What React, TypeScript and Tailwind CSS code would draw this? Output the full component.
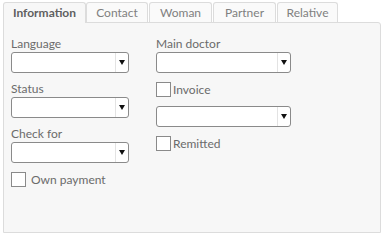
import React from 'react';

const tabs = [
  { name: 'Information', cls: 'w-[83px]' },
  { name: 'Contact', cls: 'w-[62px]' },
  { name: 'Woman', cls: 'ml-px w-[63px]' },
  { name: 'Partner', cls: 'ml-px w-[63px]' },
  { name: 'Relative', cls: 'ml-px w-[61px]' },
];

function Select({ width }: { width: string }) {
  return (
    <div className={`flex h-[21px] ${width} rounded-[3px] border border-[#8a8a8a] bg-white`}>
      <div className="flex-1" />
      <div className="flex w-[13px] items-center justify-center border-l border-[#e3e3e3]">
        <svg width="6" height="5" viewBox="0 0 6 5">
          <path d="M0 0H6L3 5Z" fill="#111" />
        </svg>
      </div>
    </div>
  );
}

function Check({ label, gap }: { label: string; gap: string }) {
  return (
    <div className={`flex items-center ${gap}`}>
      <div className="h-[15px] w-[15px] border border-[#8a8a8a] bg-white" />
      <span className="text-[12px] leading-[15px] text-[#6b6b6b]">{label}</span>
    </div>
  );
}

export default function App() {
  return (
    <div className="h-[240px] w-[383px] bg-white pl-[3px] pr-[2px] pt-[2px] font-['Lato',sans-serif]">
      <div className="flex">
        {tabs.map((t, i) => (
          <div
            key={t.name}
            className={
              i === 0
                ? `relative z-10 -mb-px flex h-[21px] ${t.cls} items-center justify-center rounded-t-[3px] border border-b-0 border-[#dcdcdc] bg-[#f7f7f7] text-[12px] font-bold text-[#5f5f5f]`
                : `flex h-[20px] ${t.cls} items-center justify-center rounded-t-[3px] border border-b-0 border-[#dcdcdc] bg-[#fafafa] text-[12px] text-[#808080]`
            }
          >
            {t.name}
          </div>
        ))}
      </div>
      <div className="flex h-[211px] gap-[27px] rounded-tr-[3px] border border-[#dcdcdc] bg-[#f7f7f7] pl-[7px] pt-[13px]">
        <div className="flex w-[118px] flex-col">
          <span className="text-[12px] leading-[16px] text-[#6b6b6b]">Language</span>
          <Select width="w-[118px]" />
          <span className="mt-[8px] text-[12px] leading-[16px] text-[#6b6b6b]">Status</span>
          <Select width="w-[118px]" />
          <span className="mt-[8px] text-[12px] leading-[16px] text-[#6b6b6b]">Check for</span>
          <Select width="w-[118px]" />
          <div className="mt-[9px]">
            <Check label="Own payment" gap="gap-[5px]" />
          </div>
        </div>
        <div className="flex w-[135px] flex-col">
          <span className="text-[12px] leading-[16px] text-[#6b6b6b]">Main doctor</span>
          <Select width="w-[135px]" />
          <div className="mt-[9px]">
            <Check label="Invoice" gap="gap-[2px]" />
          </div>
          <div className="mt-[9px]">
            <Select width="w-[135px]" />
          </div>
          <div className="mt-[9px]">
            <Check label="Remitted" gap="gap-[2px]" />
          </div>
        </div>
      </div>
    </div>
  );
}
